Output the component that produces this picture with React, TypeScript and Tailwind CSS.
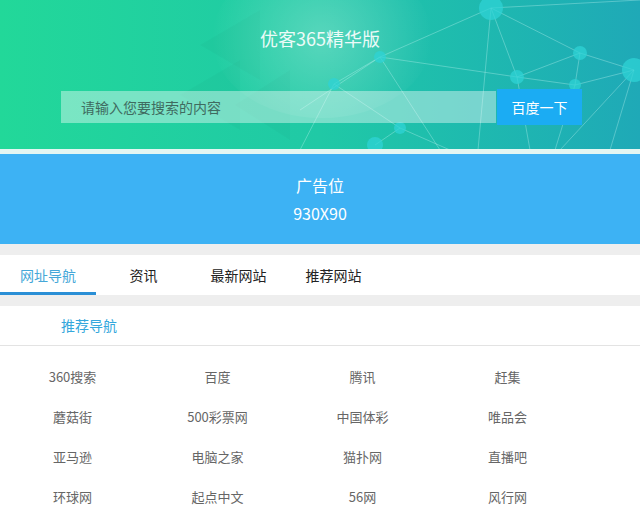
const tabs = ["网址导航", "资讯", "最新网站", "推荐网站"];

const sites = [
  "360搜索", "百度", "腾讯", "赶集",
  "蘑菇街", "500彩票网", "中国体彩", "唯品会",
  "亚马逊", "电脑之家", "猫扑网", "直播吧",
  "环球网", "起点中文", "56网", "风行网",
];

const nodes: [number, number, number][] = [
  [491, 8, 12], [380, 57, 6], [517, 77, 7], [580, 53, 7], [634, 70, 12],
  [575, 85, 6], [334, 84, 6], [400, 128, 6], [375, 145, 8], [440, 170, 6],
];

const links: [number, number, number, number][] = [
  [491, 8, 380, 57], [491, 8, 517, 77], [491, 8, 580, 53], [491, 8, 478, 150],
  [380, 57, 517, 77], [517, 77, 575, 85], [575, 85, 634, 70], [580, 53, 634, 70],
  [517, 77, 580, 53], [580, 53, 575, 85], [380, 57, 334, 84], [334, 84, 400, 128],
  [380, 57, 440, 150], [400, 128, 375, 145], [400, 128, 450, 150], [334, 84, 300, 150],
  [517, 77, 530, 150], [575, 85, 555, 150], [634, 70, 560, 150], [634, 70, 610, 150],
  [380, 57, 300, 110], [491, 8, 640, 0],
];

function Network() {
  return (
    <svg className="absolute inset-0" width="640" height="149" viewBox="0 0 640 149">
      <defs>
        <radialGradient id="glow" cx="322" cy="38" r="110" gradientUnits="userSpaceOnUse">
          <stop offset="0" stopColor="#ffffff" stopOpacity="0.25" />
          <stop offset="1" stopColor="#ffffff" stopOpacity="0" />
        </radialGradient>
      </defs>
      <polygon points="260,10 200,45 260,80" fill="#000" opacity="0.02" />
      <polygon points="240,60 180,95 240,130" fill="#000" opacity="0.02" />
      <polygon points="290,70 235,105 290,140" fill="#000" opacity="0.025" />
      <ellipse cx="322" cy="38" rx="110" ry="80" fill="url(#glow)" />
      {links.map(([x1, y1, x2, y2], i) => (
        <line key={i} x1={x1} y1={y1} x2={x2} y2={y2} stroke="#bff3f0" strokeOpacity="0.45" strokeWidth="0.8" />
      ))}
      {nodes.map(([cx, cy, r], i) => (
        <circle key={i} cx={cx} cy={cy} r={r} fill="#2fd3d6" fillOpacity="0.75" />
      ))}
    </svg>
  );
}

export default function App() {
  return (
    <div
      className="w-[640px] bg-white"
      style={{ fontFamily: '"Noto Sans CJK SC", "Noto Sans", sans-serif' }}
    >
      <header className="relative h-[149px] overflow-hidden bg-gradient-to-r from-[#22d899] via-[#20c9a6] to-[#1fa9b7]">
        <Network />
        <div className="relative flex flex-col">
          <h1 className="pt-[26px] text-center text-[18px] leading-6 font-normal text-white/90">
            优客365精华版
          </h1>
          <div className="mt-[39px] flex items-center pl-[61px]">
            <div className="flex h-8 w-[435px] items-center bg-white/40 pl-5 text-[14px] text-[#3f6b60]">
              请输入您要搜索的内容
            </div>
            <button className="ml-[1px] h-9 w-[85px] bg-[#1bacf3] text-[14px] text-white">
              百度一下
            </button>
          </div>
        </div>
      </header>
      <div className="h-[5px] bg-[#e3f6f2]" />
      <section className="flex h-[90px] flex-col items-center justify-center bg-[#3db2f4] text-[16px] leading-7 text-white">
        <p>广告位</p>
        <p>930X90</p>
      </section>
      <div className="h-[11px] bg-[#eeeeee]" />
      <nav className="flex h-10 bg-white">
        {tabs.map((t, i) => (
          <div
            key={t}
            className={
              i === 0
                ? "flex w-[96px] items-center justify-center border-b-[3px] border-[#2a8fd6] pt-[3px] text-[14px] text-[#45a7d8]"
                : "flex w-[95px] items-center justify-center text-[14px] text-[#222222]"
            }
          >
            {t}
          </div>
        ))}
      </nav>
      <div className="h-[11px] bg-[#eeeeee]" />
      <div className="flex h-10 items-center border-b border-[#e3e3e3] pl-[61px] text-[14px] text-[#34a7dc]">
        推荐导航
      </div>
      <div className="grid w-[580px] grid-cols-4 pt-[11px]">
        {sites.map((s) => (
          <div key={s} className="flex h-10 items-center justify-center text-[13px] text-[#666666]">
            {s}
          </div>
        ))}
      </div>
    </div>
  );
}
